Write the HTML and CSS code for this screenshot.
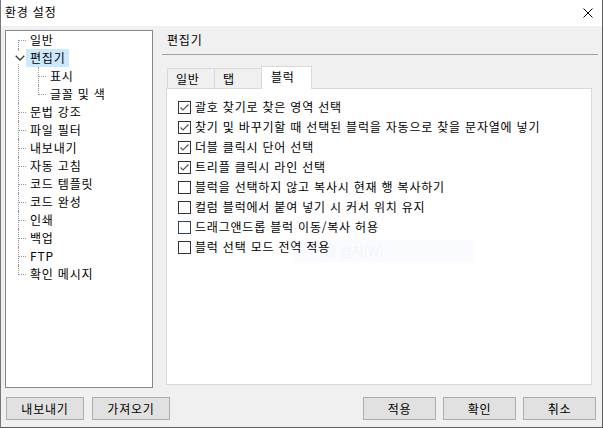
FILE: index.html
```html
<!DOCTYPE html>
<html lang="ko">
<head>
<meta charset="utf-8">
<title>환경 설정</title>
<link rel="stylesheet" href="styles.css">
</head>
<body>
<div class="window">
  <div class="titlebar">
    <span class="title">환경 설정</span>
    <svg class="close" width="10" height="10" viewBox="0 0 10 10"><path d="M0.5 0.5 L9.5 9.5 M9.5 0.5 L0.5 9.5" stroke="#000" stroke-width="1" fill="none"/></svg>
  </div>
  <div class="content">
    <div class="main">
      <div class="tree">
        <ul class="nodes">
          <li class="node first"><span class="label">일반</span></li>
          <li class="node open">
            <span class="twisty"><svg width="10" height="6" viewBox="0 0 10 6"><path d="M0.7 0.7 L5 5 L9.3 0.7" stroke="#404040" stroke-width="1.4" fill="none"/></svg></span>
            <span class="label selected">편집기</span>
            <ul class="nodes children">
              <li class="node"><span class="label">표시</span></li>
              <li class="node last"><span class="label">글꼴 및 색</span></li>
            </ul>
          </li>
          <li class="node"><span class="label">문법 강조</span></li>
          <li class="node"><span class="label">파일 필터</span></li>
          <li class="node"><span class="label">내보내기</span></li>
          <li class="node"><span class="label">자동 고침</span></li>
          <li class="node"><span class="label">코드 템플릿</span></li>
          <li class="node"><span class="label">코드 완성</span></li>
          <li class="node"><span class="label">인쇄</span></li>
          <li class="node"><span class="label">백업</span></li>
          <li class="node"><span class="label">FTP</span></li>
          <li class="node last"><span class="label">확인 메시지</span></li>
        </ul>
      </div>
      <div class="pane">
        <div class="heading">편집기</div>
        <div class="tabs">
          <div class="tab tab-general">일반</div>
          <div class="tab tab-tab">탭</div>
          <div class="tab active tab-block">블럭</div>
        </div>
        <div class="tabpanel">
          <div class="ghost">창 캡처(W)</div>
          <ul class="checks">
            <li class="check"><svg class="cb" width="13" height="13" viewBox="0 0 13 13"><rect x="0.5" y="0.5" width="12" height="12" fill="#fff" stroke="#333"/><path d="M2.5 6.5 L5 9 L10.5 3.5" fill="none" stroke="#555" stroke-width="1.1"/></svg><span>괄호 찾기로 찾은 영역 선택</span></li>
            <li class="check"><svg class="cb" width="13" height="13" viewBox="0 0 13 13"><rect x="0.5" y="0.5" width="12" height="12" fill="#fff" stroke="#333"/><path d="M2.5 6.5 L5 9 L10.5 3.5" fill="none" stroke="#555" stroke-width="1.1"/></svg><span>찾기 및 바꾸기할 때 선택된 블럭을 자동으로 찾을 문자열에 넣기</span></li>
            <li class="check"><svg class="cb" width="13" height="13" viewBox="0 0 13 13"><rect x="0.5" y="0.5" width="12" height="12" fill="#fff" stroke="#333"/><path d="M2.5 6.5 L5 9 L10.5 3.5" fill="none" stroke="#555" stroke-width="1.1"/></svg><span>더블 클릭시 단어 선택</span></li>
            <li class="check"><svg class="cb" width="13" height="13" viewBox="0 0 13 13"><rect x="0.5" y="0.5" width="12" height="12" fill="#fff" stroke="#333"/><path d="M2.5 6.5 L5 9 L10.5 3.5" fill="none" stroke="#555" stroke-width="1.1"/></svg><span>트리플 클릭시 라인 선택</span></li>
            <li class="check"><svg class="cb" width="13" height="13" viewBox="0 0 13 13"><rect x="0.5" y="0.5" width="12" height="12" fill="#fff" stroke="#333"/></svg><span>블럭을 선택하지 않고 복사시 현재 행 복사하기</span></li>
            <li class="check"><svg class="cb" width="13" height="13" viewBox="0 0 13 13"><rect x="0.5" y="0.5" width="12" height="12" fill="#fff" stroke="#333"/></svg><span>컬럼 블럭에서 붙여 넣기 시 커서 위치 유지</span></li>
            <li class="check"><svg class="cb" width="13" height="13" viewBox="0 0 13 13"><rect x="0.5" y="0.5" width="12" height="12" fill="#fff" stroke="#2a4560"/></svg><span>드래그앤드롭 블럭 이동/복사 허용</span></li>
            <li class="check"><svg class="cb" width="13" height="13" viewBox="0 0 13 13"><rect x="0.5" y="0.5" width="12" height="12" fill="#fff" stroke="#333"/></svg><span>블럭 선택 모드 전역 적용</span></li>
          </ul>
        </div>
      </div>
    </div>
    <div class="buttons">
      <div class="group">
        <button class="btn wide">내보내기</button>
        <button class="btn wide">가져오기</button>
      </div>
      <div class="group">
        <button class="btn">적용</button>
        <button class="btn">확인</button>
        <button class="btn">취소</button>
      </div>
    </div>
  </div>
</div>
</body>
</html>
```
FILE: styles.css
```css
* { box-sizing: border-box; }
html, body { margin: 0; padding: 0; }
body {
  width: 603px;
  height: 428px;
  overflow: hidden;
  font-family: "Noto Sans CJK KR", "Noto Sans", sans-serif;
  font-size: 12px;
  letter-spacing: 0.8px;
  color: #000;
  background: #f0f0f0;
}
.window {
  position: relative;
  width: 603px;
  height: 428px;
  border-left: 1px solid #777;
  border-right: 1px solid #5c5c5c;
  border-bottom: 1px solid #5c5c5c;
  display: flex;
  flex-direction: column;
  background: #f0f0f0;
}
.titlebar {
  height: 26px;
  background: #fff;
  display: flex;
  align-items: center;
  justify-content: space-between;
  padding: 0 9px 2px 4px;
}
.title { line-height: 18px; }
.close { display: block; margin-top: 1px; }
.content {
  flex: 1;
  display: flex;
  flex-direction: column;
  padding: 4px 4px 0 4px;
}
.main {
  display: flex;
  height: 358px;
}
.tree {
  width: 148px;
  height: 358px;
  background: #fff;
  border: 1px solid #828790;
}
.nodes {
  list-style: none;
  margin: 0;
  padding: 0;
}
.node {
  position: relative;
  padding-left: 20px;
}
.node::before {
  content: "";
  position: absolute;
  left: 12px;
  top: 0;
  bottom: 0;
  border-left: 1px dotted #9a9a9a;
}
.node.first::before { top: 9px; }
.node.last::before { bottom: auto; height: 10px; }
.node::after {
  content: "";
  position: absolute;
  left: 13px;
  top: 9px;
  width: 7px;
  border-top: 1px dotted #9a9a9a;
}
.label {
  display: inline-block;
  position: relative;
  z-index: 1;
  height: 18px;
  line-height: 18px;
  padding: 0 3px 0 4px;
  white-space: nowrap;
}
.label.selected { background: #cce8ff; }
.twisty {
  position: absolute;
  z-index: 2;
  left: 6px;
  top: 3px;
  width: 14px;
  height: 12px;
  background: #fff;
  display: flex;
  align-items: center;
  justify-content: center;
  padding-left: 1px;
}
.twisty svg { display: block; }
.pane {
  flex: 1;
  margin-left: 9px;
  display: flex;
  flex-direction: column;
}
.heading {
  height: 25px;
  line-height: 20px;
  padding-left: 5px;
  border-bottom: 1px solid #a0a0a0;
}
.tabs {
  display: flex;
  align-items: flex-end;
  height: 22px;
  margin-top: 11px;
  margin-left: 5px;
  position: relative;
  z-index: 2;
}
.tab {
  height: 20px;
  line-height: 19px;
  padding-left: 8px;
  background: #f0f0f0;
  border: 1px solid #d9d9d9;
  border-bottom: none;
}
.tab + .tab { border-left: none; }
.tab-general { width: 48px; }
.tab-tab { width: 47px; }
.tab-block { width: 51px; }
.tab.active {
  height: 23px;
  line-height: 20px;
  background: #fff;
  margin-bottom: -1px;
  border-left: 1px solid #d9d9d9;
  margin-left: -1px;
  padding-left: 9px;
}
.tabpanel {
  position: relative;
  margin-left: 4px;
  width: 426px;
  height: 297px;
  background: #fff;
  border: 1px solid #d9d9d9;
}
.ghost {
  position: absolute;
  left: 127px;
  top: 151px;
  width: 179px;
  height: 22px;
  line-height: 22px;
  padding-left: 30px;
  background: #fafbfe;
  color: #f2f4f9;
  font-size: 13px;
  letter-spacing: 0;
}
.checks {
  position: relative;
  z-index: 1;
  list-style: none;
  margin: 0;
  padding: 8px 0 0 11px;
}
.check {
  height: 20px;
  display: flex;
  align-items: center;
  white-space: nowrap;
}
.cb { display: block; flex: none; margin-right: 4px; }
.check span { line-height: 18px; }
.buttons {
  display: flex;
  justify-content: space-between;
  margin-top: 9px;
  padding: 0 2px 0 1px;
}
.group {
  display: flex;
  gap: 7px;
}
.group:first-child { gap: 8px; }
.btn {
  width: 73px;
  height: 23px;
  padding: 0;
  margin: 0;
  font-family: inherit;
  font-size: 12px;
  letter-spacing: 0.8px;
  color: #000;
  background: #e1e1e1;
  border: 1px solid #adadad;
  border-radius: 0;
  line-height: 20px;
}
.btn.wide { width: 78px; }
```
